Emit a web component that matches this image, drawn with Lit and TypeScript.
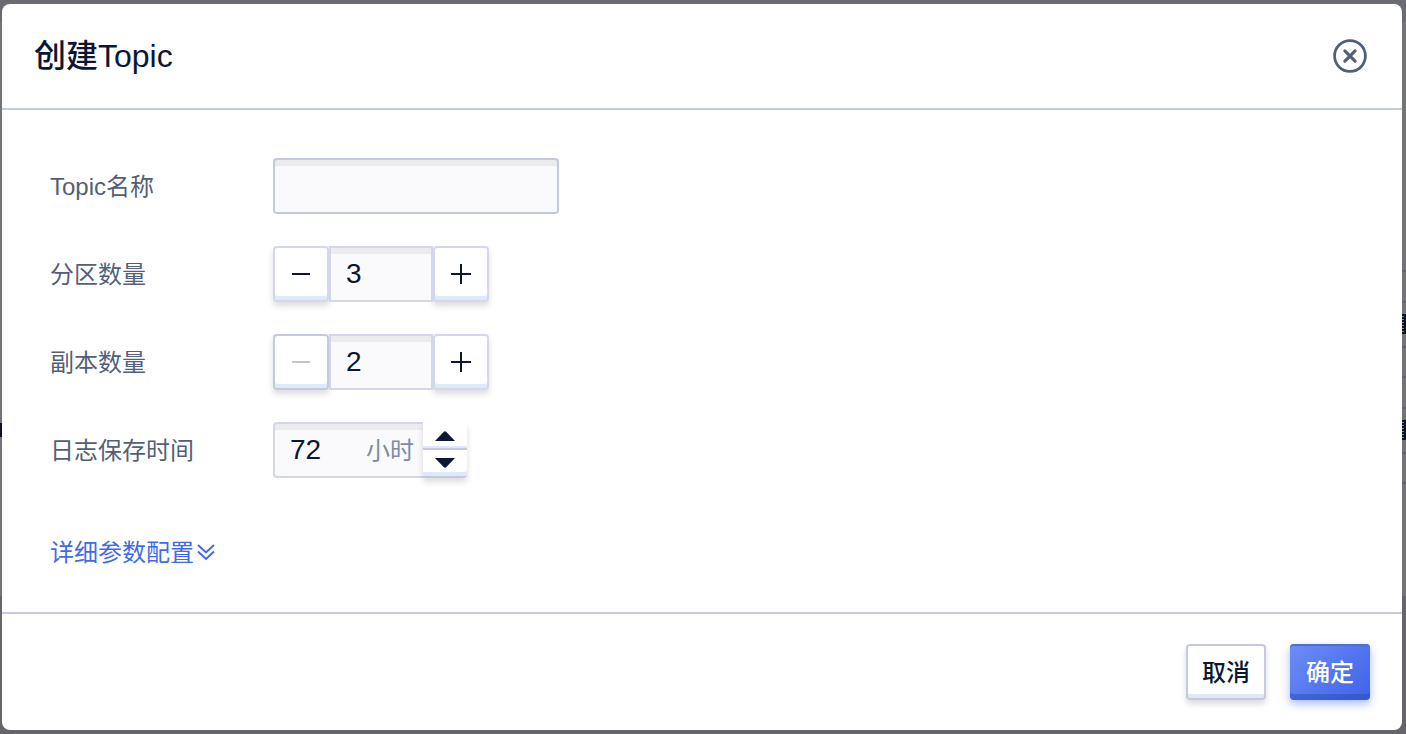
import { LitElement, html, css, svg } from "lit";
import { customElement, property, state } from "lit/decorators.js";

const minus = svg`<path d="M5 14H23" />`;
const plus = svg`<path d="M4 14H24M14 4V24" />`;

@customElement("number-counter")
class NumberCounter extends LitElement {
  @property({ type: Number }) value = 1;
  @property({ type: Number }) min = 2;
  @property() label = "";

  static styles = css`
    :host {
      display: flex;
    }
    .step {
      box-sizing: border-box;
      display: flex;
      align-items: center;
      justify-content: center;
      width: 56px;
      height: 56px;
      padding: 0;
      border: 2px solid #d3d7e9;
      border-radius: 4px;
      background: #fff;
      color: #0b1734;
      box-shadow: inset 0 -4px 0 #e0e8fb, 0 4px 6px rgba(0, 0, 0, 0.14);
    }
    .step:disabled {
      border-color: #c4cadb;
      color: #c6c6c8;
    }
    .icon {
      width: 28px;
      height: 28px;
      fill: none;
      stroke: currentColor;
      stroke-width: 2;
    }
    .value {
      box-sizing: border-box;
      z-index: 1;
      width: 104px;
      height: 56px;
      margin: 0;
      padding: 0 14px 0 15px;
      border: 2px solid #d3d7e9;
      border-radius: 0;
      background: #fafafc;
      box-shadow: inset 0 6px 0 #ececee;
      color: #0b1734;
      font: 28px "Liberation Sans", Arial, sans-serif;
      outline: none;
    }
  `;

  render() {
    return html`
      <button class="step" aria-label="减少" ?disabled=${this.value <= this.min} @click=${() => this.value--}>
        <svg class="icon" viewBox="0 0 28 28" aria-hidden="true">${minus}</svg>
      </button>
      <input class="value" aria-label=${this.label} .value=${String(this.value)} />
      <button class="step" aria-label="增加" @click=${() => this.value++}>
        <svg class="icon" viewBox="0 0 28 28" aria-hidden="true">${plus}</svg>
      </button>
    `;
  }
}

@customElement("app-root")
class AppRoot extends LitElement {
  @state() hours = 72;

  static styles = css`
    :host {
      box-sizing: border-box;
      display: flex;
      min-height: 100vh;
      padding: 4px 4px 4px 2px;
      background:
        repeating-linear-gradient(#0b1226 0 2px, #8a8b90 2px 3px) right 2px top 314px / 2px 20px no-repeat,
        repeating-linear-gradient(#0b1226 0 2px, #8a8b90 2px 3px) right 2px top 420px / 2px 20px no-repeat,
        linear-gradient(#0b1226, #0b1226) right 314px / 2px 20px no-repeat,
        linear-gradient(#0b1226, #0b1226) right 420px / 2px 20px no-repeat,
        linear-gradient(#0b1226, #0b1226) left 423px / 2px 14px no-repeat,
        linear-gradient(#64656f, #64656f) right 270px / 4px 2px no-repeat,
        linear-gradient(#64656f, #64656f) right 301px / 4px 2px no-repeat,
        linear-gradient(#64656f, #64656f) right 346px / 4px 2px no-repeat,
        linear-gradient(#64656f, #64656f) right 376px / 4px 2px no-repeat,
        linear-gradient(#64656f, #64656f) right 407px / 4px 2px no-repeat,
        linear-gradient(#64656f, #64656f) right 452px / 4px 2px no-repeat,
        linear-gradient(#64656f, #64656f) right 482px / 4px 2px no-repeat,
        linear-gradient(#6b6c72 22px, #737475 22px, #737475 596px, #66666a 596px);
      font-family: "Liberation Sans", Arial, "Noto Sans CJK SC", sans-serif;
      color: #0b1734;
    }
    .dialog {
      flex: 1;
      display: flex;
      flex-direction: column;
      border-radius: 8px;
      background: #fff;
    }
    .header {
      display: flex;
      align-items: center;
      justify-content: space-between;
      height: 104px;
      padding: 0 34px 0 32px;
      border-bottom: 2px solid #c4cadb;
    }
    .title {
      margin: 0;
      font-size: 32px;
      font-weight: 500;
      line-height: 48px;
    }
    .close {
      display: flex;
      padding: 0;
      border: 0;
      background: none;
      color: #535f78;
    }
    .close-icon {
      width: 36px;
      height: 36px;
      fill: none;
      stroke: currentColor;
    }
    .body {
      flex: 1;
      display: flex;
      flex-direction: column;
      gap: 32px;
      padding: 48px;
      padding-bottom: 40px;
    }
    .row {
      display: grid;
      grid-template-columns: 223px 1fr;
      align-items: center;
      height: 56px;
    }
    .label {
      padding-top: 2px;
      font-size: 24px;
      line-height: 36px;
      color: #535f78;
    }
    .name,
    .hours {
      box-sizing: border-box;
      height: 56px;
      margin: 0;
      border: 2px solid #c4cadb;
      border-radius: 4px;
      background: #fafafc;
      box-shadow: inset 0 6px 0 #ececee;
      outline: none;
    }
    .name {
      width: 286px;
      padding: 0 14px;
      font: 24px "Liberation Sans", Arial, "Noto Sans CJK SC", sans-serif;
    }
    .duration {
      display: flex;
    }
    .hours {
      display: flex;
      align-items: center;
      justify-content: space-between;
      width: 150px;
      padding: 0 9px 0 15px;
      border-color: #d3d7e9;
      border-right: 0;
      border-radius: 4px 0 0 4px;
    }
    .hours-value {
      width: 64px;
      margin: 0;
      padding: 0;
      border: 0;
      background: none;
      color: #0b1734;
      font: 28px "Liberation Sans", Arial, sans-serif;
      outline: none;
    }
    .unit {
      padding-top: 2px;
      font-size: 24px;
      line-height: 36px;
      color: #7c8aa8;
    }
    .spinner {
      display: flex;
      flex-direction: column;
      width: 44px;
      height: 56px;
      border-radius: 0 4px 4px 0;
      box-shadow: 0 4px 6px rgba(0, 0, 0, 0.14);
    }
    .spin {
      box-sizing: border-box;
      display: flex;
      align-items: center;
      justify-content: center;
      height: 28px;
      padding: 0;
      border: 0;
      border-bottom: 2px solid #c4cadb;
      background: #fff;
      box-shadow: inset 0 -2px 0 #e0e8fb;
    }
    .spin.down {
      border-radius: 0 0 4px 0;
      box-shadow: inset 0 -4px 0 #e0e8fb;
    }
    .arrow {
      width: 20px;
      height: 10px;
      fill: #0b1734;
    }
    .spin.up .arrow {
      margin-top: 2px;
    }
    .more {
      display: flex;
      align-items: center;
      align-self: flex-start;
      gap: 2px;
      margin-top: 25px;
      font-size: 24px;
      line-height: 36px;
      color: #4069ea;
      text-decoration: none;
    }
    .chevrons {
      width: 20px;
      height: 20px;
      fill: none;
      stroke: currentColor;
      stroke-width: 2;
    }
    .footer {
      display: flex;
      justify-content: flex-end;
      gap: 24px;
      padding: 30px 32px;
      border-top: 2px solid #c4cadb;
    }
    .button {
      box-sizing: border-box;
      width: 80px;
      height: 56px;
      padding: 0 0 4px;
      border: 2px solid #c4cadb;
      border-radius: 4px;
      background: #fff;
      box-shadow: inset 0 -4px 0 #e0e8fb, 0 4px 6px rgba(0, 0, 0, 0.14);
      color: #0b1734;
      font: 500 24px "Liberation Sans", "Noto Sans CJK SC", sans-serif;
    }
    .button.primary {
      border: 0;
      background: linear-gradient(135deg, #6d8df7, #3d63e8);
      box-shadow: inset 0 2px 0 #4c6fd9, inset 0 -6px 0 rgba(45, 75, 180, 0.5),
        0 4px 8px rgba(64, 105, 234, 0.45);
      color: #fff;
    }
  `;

  render() {
    return html`
      <section class="dialog" role="dialog" aria-labelledby="title">
        <header class="header">
          <h1 class="title" id="title">创建Topic</h1>
          <button class="close" aria-label="关闭">
            <svg class="close-icon" viewBox="0 0 36 36" aria-hidden="true">
              <circle cx="18" cy="18" r="15.4" stroke-width="2.8" />
              <path d="M12.9 12.9L23.1 23.1M23.1 12.9L12.9 23.1" stroke-width="3.2" stroke-linecap="round" />
            </svg>
          </button>
        </header>
        <div class="body">
          <div class="row">
            <label class="label" for="name">Topic名称</label>
            <input class="name" id="name" type="text" />
          </div>
          <div class="row">
            <span class="label">分区数量</span>
            <number-counter label="分区数量" .value=${3}></number-counter>
          </div>
          <div class="row">
            <span class="label">副本数量</span>
            <number-counter label="副本数量" .value=${2}></number-counter>
          </div>
          <div class="row">
            <label class="label" for="hours">日志保存时间</label>
            <div class="duration">
              <div class="hours">
                <input class="hours-value" id="hours" .value=${String(this.hours)} />
                <span class="unit">小时</span>
              </div>
              <div class="spinner">
                <button class="spin up" aria-label="增加" @click=${() => this.hours++}>
                  <svg class="arrow" viewBox="0 0 20 10" aria-hidden="true"><path d="M0 10L8.6 1Q10 -0.4 11.4 1L20 10Z" /></svg>
                </button>
                <button class="spin down" aria-label="减少" @click=${() => this.hours--}>
                  <svg class="arrow" viewBox="0 0 20 10" aria-hidden="true"><path d="M0 0L8.6 9Q10 10.4 11.4 9L20 0Z" /></svg>
                </button>
              </div>
            </div>
          </div>
          <a class="more" href="#">
            详细参数配置
            <svg class="chevrons" viewBox="0 0 20 20" aria-hidden="true">
              <path d="M2 2L10 9.5L18 2M2 8.5L10 16L18 8.5" />
            </svg>
          </a>
        </div>
        <footer class="footer">
          <button class="button">取消</button>
          <button class="button primary">确定</button>
        </footer>
      </section>
    `;
  }
}
